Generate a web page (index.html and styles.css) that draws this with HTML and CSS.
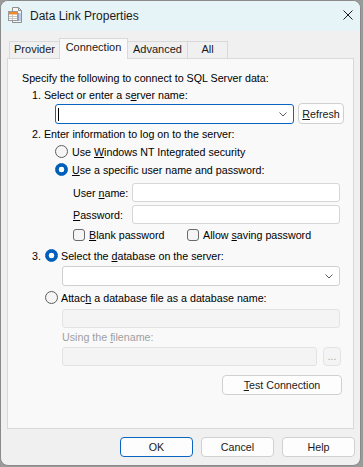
FILE: index.html
```html
<!DOCTYPE html>
<html lang="en">
<head>
<meta charset="utf-8">
<title>Data Link Properties</title>
<link rel="stylesheet" href="styles.css">
</head>
<body>
<div class="window">
  <div class="titlebar">
    <svg class="app-icon" viewBox="0 0 16 16" width="16" height="16">
      <path d="M5.5 0.5H11.5L14.5 3.5V15.5H5.5Z" fill="#f6f6f6" stroke="#8e8e8e"/>
      <path d="M11.5 0.5V3.5H14.5" fill="none" stroke="#8e8e8e"/>
      <path d="M11.5 6V14M13 6V14" stroke="#8ea3c4"/>
      <rect x="1.5" y="4.5" width="9" height="9" fill="#ffffff" stroke="#9a9a9a"/>
      <rect x="2" y="5" width="8" height="2.5" fill="#ee8a2a"/>
      <path d="M2 9.5H10M2 11.5H10M5.5 8V13" stroke="#c4c4c4"/>
    </svg>
    <span class="title">Data Link Properties</span>
    <svg class="close" viewBox="0 0 10 10" width="10" height="10">
      <path d="M0.5 0.5L9.5 9.5M9.5 0.5L0.5 9.5" stroke="#1b1b1b" stroke-width="1"/>
    </svg>
  </div>

  <div class="client">
    <div class="tabs">
      <div class="tab tab-provider">Provider</div>
      <div class="tab tab-connection active">Connection</div>
      <div class="tab tab-advanced">Advanced</div>
      <div class="tab tab-all">All</div>
    </div>

    <div class="panel">
      <div class="line">Specify the following to connect to SQL Server data:</div>
      <div class="line step mt1">1. Select or enter a s<u>e</u>rver name:</div>

      <div class="combo-row">
        <div class="combo focused">
          <span class="caret"></span>
          <svg class="chev" viewBox="0 0 8 5" width="8" height="5"><path d="M0.5 0.5L4 4L7.5 0.5" fill="none" stroke="#5c5c5c"/></svg>
        </div>
        <button class="btn refresh"><u>R</u>efresh</button>
      </div>

      <div class="line step mt2">2. Enter information to log on to the server:</div>
      <div class="opt indent1 mt1"><span class="radio"></span><span class="opt-text">Use <u>W</u>indows NT Integrated security</span></div>
      <div class="opt indent1 mt1"><span class="radio on"></span><span class="opt-text"><u>U</u>se a specific user name and password:</span></div>

      <div class="field-row mt5">
        <span class="field-label">User <u>n</u>ame:</span>
        <div class="edit field-edit"></div>
      </div>
      <div class="field-row mt3">
        <span class="field-label"><u>P</u>assword:</span>
        <div class="edit field-edit"></div>
      </div>

      <div class="checks mt2">
        <div class="check-item first"><span class="check"></span><span class="check-text"><u>B</u>lank password</span></div>
        <div class="check-item"><span class="check"></span><span class="check-text">Allow <u>s</u>aving password</span></div>
      </div>

      <div class="opt step mt4"><span class="num">3.</span><span class="radio on"></span><span class="opt-text narrow">Select the <u>d</u>atabase on the server:</span></div>
      <div class="combo wide mt2">
        <svg class="chev" viewBox="0 0 8 5" width="8" height="5"><path d="M0.5 0.5L4 4L7.5 0.5" fill="none" stroke="#5c5c5c"/></svg>
      </div>

      <div class="opt indent2 mt3"><span class="radio"></span><span class="opt-text narrow">Attac<u>h</u> a database file as a database name:</span></div>
      <div class="edit disabled wide mt3"></div>
      <div class="line disabled-text indent3 mt1">Using the <u>f</u>ilename:</div>
      <div class="file-row mt2">
        <div class="edit disabled file-edit"></div>
        <div class="btn disabled-btn browse">...</div>
      </div>

      <button class="btn test"><span><u>T</u>est Connection</span></button>
    </div>

    <div class="footer">
      <button class="btn dlg default">OK</button>
      <button class="btn dlg">Cancel</button>
      <button class="btn dlg">Help</button>
    </div>
  </div>
</div>
</body>
</html>
```

FILE: styles.css
```css
* {
  box-sizing: border-box;
}

html,
body {
  margin: 0;
  padding: 0;
}

body {
  width: 363px;
  height: 467px;
  overflow: hidden;
  background: #9a9a9a;
  font-family: "Liberation Sans", Arial, sans-serif;
  font-size: 10.7px;
  color: #000;
}

u {
  text-decoration: underline;
  text-underline-offset: 1px;
}

.window {
  width: 361px;
  height: 466px;
  border: 1px solid #8a8a8a;
  border-radius: 8px;
  background: #f0f0f0;
  overflow: hidden;
  display: flex;
  flex-direction: column;
}

/* Title bar */
.titlebar {
  flex: none;
  height: 30px;
  background: #e7f4f7;
  display: flex;
  align-items: center;
  padding: 0 7px 0 6px;
}

.app-icon {
  flex: none;
  width: 16px;
  height: 16px;
  margin-bottom: 3px;
}

.title {
  flex: 1;
  margin-left: 7px;
  font-size: 12px;
  color: #1b1b1b;
  margin-bottom: 1px;
}

.close {
  flex: none;
  width: 10px;
  height: 10px;
  margin-bottom: 2px;
}

/* Client area */
.client {
  flex: 1;
  padding: 7px 0 0 6px;
  display: flex;
  flex-direction: column;
}

.tabs {
  display: flex;
  align-items: flex-end;
  height: 21px;
  margin-left: 2px;
  margin-bottom: -1px;
  position: relative;
  z-index: 1;
}

.tab {
  height: 18px;
  border: 1px solid #d9d9d9;
  background: #f0f0f0;
  text-align: center;
  line-height: 15px;
  margin-left: -1px;
  color: #1a1a1a;
  font-size: 11px;
}

.tab-provider {
  margin-left: 0;
  width: 51px;
}

.tab-connection {
  width: 69px;
}

.tab-advanced {
  width: 61px;
}

.tab-all {
  width: 41px;
}

.tab.active {
  height: 21px;
  background: #f9f9f9;
  border-bottom: none;
  line-height: 17px;
  position: relative;
  z-index: 2;
}

.panel {
  width: 347px;
  height: 371px;
  border: 1px solid #d9d9d9;
  background: #f9f9f9;
  padding: 11px 0 0 14px;
  display: flex;
  flex-direction: column;
  align-items: flex-start;
}

.line {
  height: 16px;
  line-height: 16px;
  white-space: nowrap;
}

.step {
  margin-left: 10px;
}

.indent1 {
  margin-left: 33px;
}

.indent2 {
  margin-left: 23px;
}

.indent3 {
  margin-left: 40px;
}

.mt1 { margin-top: 1px; }
.mt2 { margin-top: 2px; }
.mt3 { margin-top: 3px; }
.mt4 { margin-top: 4px; }
.mt5 { margin-top: 5px; }

/* Combo boxes */
.combo-row {
  margin-left: 33px;
  height: 21px;
  display: flex;
  align-items: flex-end;
}

.combo {
  width: 239px;
  height: 20px;
  background: #fff;
  border: 1px solid #d0d0d0;
  border-radius: 3px;
  display: flex;
  align-items: center;
  padding: 0 6px 0 2px;
}

.combo.focused {
  border-color: #0a64c2;
}

.combo.wide {
  width: 278px;
  margin-left: 40px;
}

.caret {
  width: 1px;
  height: 13px;
  background: #000;
}

.chev {
  margin-left: auto;
  width: 8px;
  height: 5px;
}

/* Buttons */
.btn {
  font: inherit;
  color: #1a1a1a;
  background: #fdfdfd;
  border: 1px solid #d0d0d0;
  border-radius: 4px;
  padding: 0;
  margin: 0;
  display: flex;
  align-items: center;
  justify-content: center;
}

.refresh {
  width: 46px;
  height: 21px;
  margin-left: 4px;
}

.test {
  width: 120px;
  height: 20px;
  margin-top: 9px;
  margin-left: 200px;
}

/* Radio options */
.opt {
  height: 17px;
  display: flex;
  align-items: center;
  white-space: nowrap;
}

.radio {
  flex: none;
  width: 13px;
  height: 13px;
  border-radius: 50%;
  border: 1px solid #5e5e5e;
  background: #f5f5f5;
}

.radio.on {
  border-color: #005fb8;
  background: radial-gradient(circle at center, #ffffff 0 2.6px, #005fb8 3.1px);
}

.opt-text {
  margin-left: 4px;
}

.opt-text.narrow {
  margin-left: 3px;
}

.num {
  width: 13px;
}

/* Login fields */
.field-row {
  margin-left: 51px;
  height: 19px;
  display: flex;
  align-items: center;
}

.field-label {
  width: 59px;
  white-space: nowrap;
}

.edit {
  height: 19px;
  background: #fff;
  border: 1px solid #d6d6d6;
  border-radius: 3px;
}

.field-edit {
  width: 208px;
}

.checks {
  margin-left: 51px;
  height: 17px;
  display: flex;
  align-items: center;
}

.check-item {
  display: flex;
  align-items: center;
  white-space: nowrap;
}

.check-item.first {
  width: 114px;
}

.check {
  flex: none;
  width: 12px;
  height: 12px;
  border: 1px solid #6a6a6a;
  border-radius: 3px;
  background: #f5f5f5;
}

.check-text {
  margin-left: 4px;
}

/* Disabled */
.edit.disabled {
  background: #f4f4f4;
  border-color: #e3e3e3;
}

.edit.disabled.wide {
  width: 278px;
  margin-left: 40px;
}

.disabled-text {
  color: #a0a0a0;
}

.file-row {
  margin-left: 40px;
  display: flex;
  align-items: center;
}

.file-edit {
  width: 255px;
}

.disabled-btn.browse {
  width: 18px;
  height: 19px;
  margin-left: 6px;
  background: #f4f4f4;
  border-color: #e3e3e3;
  color: #a3a3a3;
  align-items: flex-end;
  padding-bottom: 3px;
  font-size: 10px;
}

/* Footer */
.footer {
  margin-top: 8px;
  padding-right: 5px;
  display: flex;
  justify-content: flex-end;
  gap: 8px;
}

.dlg {
  width: 73px;
  height: 20px;
}

.dlg.default {
  border-color: #0a64c2;
}
```
